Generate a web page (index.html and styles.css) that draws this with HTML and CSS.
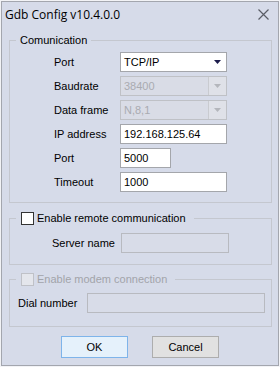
FILE: index.html
```html
<!DOCTYPE html>
<html lang="en">
<head>
    <meta charset="UTF-8">
    <title>Gdb Config</title>
    <link rel="stylesheet" href="styles.css">
</head>
<body>
    <div class="window">
        <div class="frame">
            <div class="titlebar">
                <span class="title">Gdb Config v10.4.0.0</span>
                <svg class="close" width="11" height="11" viewBox="0 0 11 11">
                    <path d="M0.5 0.5 L10.5 10.5 M10.5 0.5 L0.5 10.5" stroke="#5a5d66" stroke-width="1.2" fill="none"/>
                </svg>
            </div>

            <fieldset class="group comm">
                <legend>Comunication</legend>
                <div class="rows">
                    <label>Port</label>
                    <div class="combo">
                        <span class="value">TCP/IP</span>
                        <span class="drop">
                            <svg width="7" height="4" viewBox="0 0 7 4"><path d="M0 0 H7 L3.5 4 Z" fill="#1c1c4c"/></svg>
                        </span>
                    </div>

                    <label>Baudrate</label>
                    <div class="combo disabled">
                        <span class="value">38400</span>
                        <span class="drop">
                            <svg width="7" height="4" viewBox="0 0 7 4"><path d="M0 0 H7 L3.5 4 Z" fill="#b4b6bc"/></svg>
                        </span>
                    </div>

                    <label>Data frame</label>
                    <div class="combo disabled">
                        <span class="value">N,8,1</span>
                        <span class="drop">
                            <svg width="7" height="4" viewBox="0 0 7 4"><path d="M0 0 H7 L3.5 4 Z" fill="#b4b6bc"/></svg>
                        </span>
                    </div>

                    <label>IP address</label>
                    <div class="field">192.168.125.64</div>

                    <label>Port</label>
                    <div class="field short">5000</div>

                    <label>Timeout</label>
                    <div class="field">1000</div>
                </div>
            </fieldset>

            <fieldset class="group remote">
                <legend><span class="check"></span>Enable remote communication</legend>
                <div class="rows">
                    <label>Server name</label>
                    <div class="field disabled"></div>
                </div>
            </fieldset>

            <fieldset class="group modem">
                <legend class="off"><span class="check"></span>Enable modem connection</legend>
                <div class="rows">
                    <label>Dial number</label>
                    <div class="field disabled"></div>
                </div>
            </fieldset>

            <div class="buttons">
                <button class="btn default">OK</button>
                <button class="btn">Cancel</button>
            </div>
        </div>
    </div>
</body>
</html>
```

FILE: styles.css
```css
body {
  margin: 0;
  font-family: 'Liberation Sans', Arial, sans-serif;
  font-size: 11px;
  color: #000;
}

.window {
  width: 280px;
  height: 367px;
  box-sizing: border-box;
  border: 1px solid #f2f3f6;
}

.frame {
  height: 100%;
  box-sizing: border-box;
  border: 1px solid #a3a6ae;
  background-color: #d6dbe9;
}

.titlebar {
  height: 24px;
  display: flex;
  align-items: center;
  justify-content: space-between;
  padding: 0 9px 0 3px;
}

.title {
  font-family: 'Open Sans', 'Noto Sans', sans-serif;
  font-size: 12px;
}

/* group boxes */
.group {
  margin: 0 6px 0 7px;
  padding: 0;
  border: 1px solid #c4c7cf;
  min-inline-size: 0;
}

.group legend {
  margin-left: 6px;
  padding: 0 4px;
  height: 14px;
  line-height: 14px;
  display: flex;
  align-items: center;
}

.comm {
  margin-top: 7px;
}
.comm .rows {
  padding: 5px 0 10px 44px;
  grid-template-columns: 66px 107px;
}

.remote {
  margin-top: 8px;
}
.remote legend {
  padding: 0 8px 0 5px;
}
.remote .rows {
  padding: 8px 0 11px 42px;
  grid-template-columns: 69px 108px;
}

.modem {
  margin-top: 7px;
}
.modem legend {
  padding: 0 8px 0 5px;
}
.modem .rows {
  padding: 7px 0 13px 8px;
  grid-template-columns: 69px 178px;
}

.rows {
  display: grid;
  row-gap: 4px;
  grid-auto-rows: 20px;
  align-items: center;
}

/* checkboxes */
.check {
  width: 13px;
  height: 13px;
  box-sizing: border-box;
  border: 1px solid #333;
  background-color: #fff;
  margin-right: 3px;
}
.off {
  color: #a2a4aa;
}
.off .check {
  border-color: #bfc1c7;
  background-color: #e4e6ec;
}

/* inputs */
.field,
.combo {
  height: 20px;
  box-sizing: border-box;
  border: 1px solid #a4a6ab;
  background-color: #fff;
  padding-left: 3px;
  line-height: 18px;
  white-space: nowrap;
}
.field.short {
  width: 51px;
}
.field.disabled {
  border-color: #b8bac0;
  background-color: #d8dce8;
}

.combo {
  display: flex;
  justify-content: space-between;
  padding-right: 0;
}
.combo .drop {
  width: 17px;
  display: flex;
  align-items: center;
  justify-content: center;
}
.combo.disabled {
  border-color: #bfc1c6;
  background-color: #d9dce6;
  color: #a9abb1;
}
.combo.disabled .drop {
  border-left: 1px solid #c9cbd0;
  background-color: #dfe1e8;
}

/* dialog buttons */
.buttons {
  display: flex;
  justify-content: center;
  gap: 24px;
  margin-top: 9px;
}
.btn {
  width: 67px;
  height: 22px;
  font-family: 'Liberation Sans', Arial, sans-serif;
  font-size: 11px;
  color: #000;
  background-color: #e1e1e1;
  border: 1px solid #adadad;
  padding: 0;
}
.btn.default {
  background-color: #e5f1fb;
  border-color: #7eb4ea;
}
```
